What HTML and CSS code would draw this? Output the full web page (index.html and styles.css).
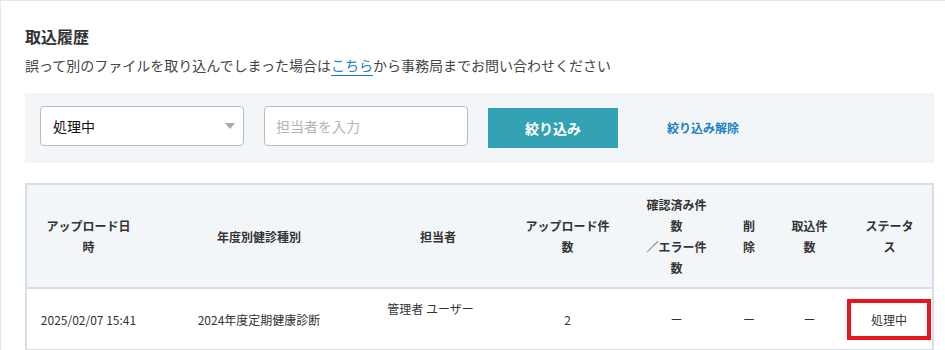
FILE: index.html
```html
<!DOCTYPE html>
<html lang="ja">
<head>
<meta charset="utf-8">
<title>取込履歴</title>
<link rel="stylesheet" href="styles.css">
</head>
<body>
<div class="page">
  <h2 class="title">取込履歴</h2>
  <p class="lead">誤って別のファイルを取り込んでしまった場合は<a class="link" href="#">こちら</a>から事務局までお問い合わせください</p>

  <div class="filter">
    <div class="select">
      <span>処理中</span>
      <svg class="caret" width="10" height="6" viewBox="0 0 10 6"><path d="M0 0H10L5 6Z" fill="#a9a9a9"/></svg>
    </div>
    <input class="input" type="text" placeholder="担当者を入力">
    <button class="btn" type="button">絞り込み</button>
    <a class="reset" href="#">絞り込み解除</a>
  </div>

  <table class="tbl">
    <colgroup>
      <col class="c1"><col class="c2"><col class="c3"><col class="c4"><col class="c5"><col class="c6"><col class="c7"><col class="c8">
    </colgroup>
    <thead>
      <tr>
        <th>アップロード日時</th>
        <th>年度別健診種別</th>
        <th>担当者</th>
        <th>アップロード件数</th>
        <th>確認済み件数<br>／エラー件数</th>
        <th>削除</th>
        <th>取込件数</th>
        <th>ステータス</th>
      </tr>
    </thead>
    <tbody>
      <tr>
        <td class="date">2025/02/07 15:41</td>
        <td>2024年度定期健康診断</td>
        <td class="user">管理者 ユーザー<br>&nbsp;</td>
        <td>2</td>
        <td>ー</td>
        <td>ー</td>
        <td>ー</td>
        <td class="status"><div class="mark">処理中</div></td>
      </tr>
    </tbody>
  </table>
</div>
</body>
</html>
```

FILE: styles.css
```css
html, body {
  margin: 0;
  padding: 0;
  background: #ffffff;
}

body {
  font-family: "Noto Sans CJK JP", "Noto Sans", sans-serif;
  color: #333333;
}

.page {
  border-top: 1px solid #e4e8ed;
  border-left: 1px solid #e4e8ed;
  padding: 23px 11px 0 24px;
}

.title {
  margin: 0;
  font-size: 16px;
  line-height: 24px;
  font-weight: 700;
  color: #333333;
}

.lead {
  margin: 5px 0 0;
  font-size: 14px;
  line-height: 24px;
  color: #444444;
}

.link {
  color: #1a80c4;
  text-decoration: underline;
  text-decoration-thickness: 1px;
  text-underline-offset: 4px;
}

.filter {
  margin-top: 16px;
  background: #f3f6f9;
  height: 70px;
  box-sizing: border-box;
  padding: 13px 15px 0;
  display: flex;
  align-items: flex-start;
}

.select {
  width: 204px;
  height: 40px;
  box-sizing: border-box;
  border: 1px solid #bcbcbc;
  border-radius: 4px;
  background: #ffffff;
  display: flex;
  align-items: center;
  justify-content: space-between;
  padding: 0 8px 0 12px;
  font-size: 14px;
  color: #111111;
}

.caret {
  display: block;
}

.input {
  margin-left: 20px;
  width: 204px;
  height: 40px;
  box-sizing: border-box;
  border: 1px solid #bcbcbc;
  border-radius: 4px;
  background: #ffffff;
  padding: 0 11px;
  font-family: "Noto Sans CJK JP", "Noto Sans", sans-serif;
  font-size: 14px;
  color: #333333;
  outline: none;
}

.input::placeholder {
  color: #b4b4b4;
}

.btn {
  margin-left: 20px;
  margin-top: 2px;
  width: 130px;
  height: 40px;
  border: none;
  background: #33a2b4;
  color: #ffffff;
  font-family: "Noto Sans CJK JP", "Noto Sans", sans-serif;
  font-size: 14px;
  font-weight: 700;
  padding: 0;
}

.reset {
  margin-left: 49px;
  margin-top: 2px;
  height: 40px;
  line-height: 40px;
  font-size: 12px;
  font-weight: 700;
  color: #1b7fc3;
  text-decoration: none;
}

.tbl {
  margin-top: 20px;
  width: 909px;
  table-layout: fixed;
  border-collapse: separate;
  border-spacing: 0;
  border: 2px solid #d8dee6;
  font-size: 12px;
  line-height: 21px;
}

.c1 { width: 123px; }
.c2 { width: 218px; }
.c3 { width: 140px; }
.c4 { width: 119px; }
.c5 { width: 99px; }
.c6 { width: 46px; }
.c7 { width: 75px; }
.c8 { width: 85px; }

.tbl th {
  background: #f3f6f9;
  font-weight: 700;
  color: #333333;
  padding: 9px 16px;
  text-align: center;
  vertical-align: middle;
  border-bottom: 2px solid #d8dee6;
}

.tbl td {
  padding: 9px 16px;
  text-align: center;
  vertical-align: middle;
  color: #333333;
}

.tbl td.date {
  padding: 9px 4px;
  white-space: nowrap;
}

.tbl td.user {
  padding-right: 31px;
}

.tbl td.status {
  padding: 9px 1px 9px 0;
}

.mark {
  height: 41px;
  box-sizing: border-box;
  border: 4px solid #e8151c;
  display: flex;
  align-items: center;
  justify-content: center;
}
```
